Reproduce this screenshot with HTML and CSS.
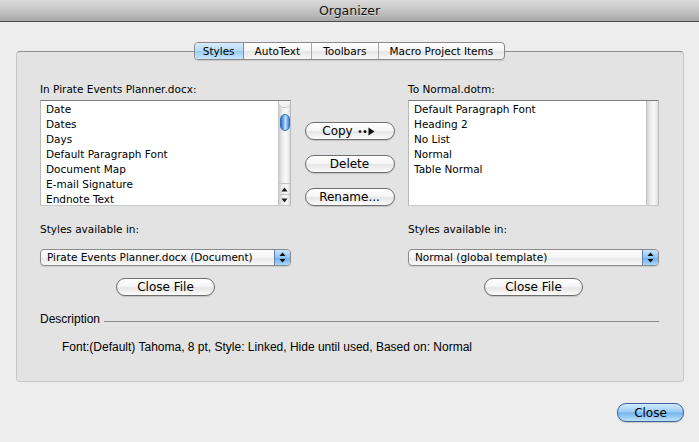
FILE: index.html
```html
<!DOCTYPE html>
<html>
<head>
<meta charset="utf-8">
<title>Organizer</title>
<link rel="stylesheet" href="styles.css">
</head>
<body>
<div class="window">
  <div class="titlebar">Organizer</div>
  <div class="content">
    <div class="panel">
      <div class="tabs">
        <span class="tab tab-active tab-narrow">Styles</span>
        <span class="tab">AutoText</span>
        <span class="tab">Toolbars</span>
        <span class="tab">Macro Project Items</span>
      </div>
      <div class="grid">
        <div class="col">
          <div class="label">In Pirate Events Planner.docx:</div>
          <div class="list">
            <ul class="items">
              <li>Date</li>
              <li>Dates</li>
              <li>Days</li>
              <li>Default Paragraph Font</li>
              <li>Document Map</li>
              <li>E-mail Signature</li>
              <li>Endnote Text</li>
            </ul>
            <div class="scrollbar">
              <div class="sb-cap"></div>
              <div class="sb-track"><div class="sb-thumb"></div></div>
              <div class="sb-arrow">
                <svg width="7" height="5" viewBox="0 0 7 5"><polygon points="3.5,0.5 6.5,4.5 0.5,4.5" fill="#1c1c1c"/></svg>
              </div>
              <div class="sb-arrow">
                <svg width="7" height="5" viewBox="0 0 7 5"><polygon points="0.5,0.5 6.5,0.5 3.5,4.5" fill="#1c1c1c"/></svg>
              </div>
            </div>
          </div>
          <div class="label label-avail">Styles available in:</div>
          <div class="popup">
            <span class="popup-text">Pirate Events Planner.docx (Document)</span>
            <span class="popup-arrow">
              <svg width="7" height="11" viewBox="0 0 7 11"><polygon points="3.5,0.5 6.5,4 0.5,4" fill="#111"/><polygon points="0.5,7 6.5,7 3.5,10.5" fill="#111"/></svg>
            </span>
          </div>
          <button class="btn btn-file">Close File</button>
        </div>
        <div class="mid">
          <button class="btn btn-mid">Copy <svg class="copy-icon" width="20" height="9" viewBox="0 0 20 9"><circle cx="3" cy="4.5" r="1.5" fill="#333"/><circle cx="8" cy="4.5" r="1.5" fill="#111"/><polygon points="11.5,0.5 17.5,4.5 11.5,8.5" fill="#111"/></svg></button>
          <button class="btn btn-mid">Delete</button>
          <button class="btn btn-mid">Rename...</button>
        </div>
        <div class="col">
          <div class="label">To Normal.dotm:</div>
          <div class="list">
            <ul class="items">
              <li>Default Paragraph Font</li>
              <li>Heading 2</li>
              <li>No List</li>
              <li>Normal</li>
              <li>Table Normal</li>
            </ul>
            <div class="scrollbar scrollbar-empty"></div>
          </div>
          <div class="label label-avail">Styles available in:</div>
          <div class="popup">
            <span class="popup-text">Normal (global template)</span>
            <span class="popup-arrow">
              <svg width="7" height="11" viewBox="0 0 7 11"><polygon points="3.5,0.5 6.5,4 0.5,4" fill="#111"/><polygon points="0.5,7 6.5,7 3.5,10.5" fill="#111"/></svg>
            </span>
          </div>
          <button class="btn btn-file">Close File</button>
        </div>
      </div>
      <div class="desc">
        <div class="desc-head"><span>Description</span><span class="rule"></span></div>
        <div class="desc-text">Font:(Default) Tahoma, 8 pt, Style: Linked, Hide until used, Based on: Normal</div>
      </div>
    </div>
    <div class="footer">
      <button class="btn btn-default">Close</button>
    </div>
  </div>
</div>
</body>
</html>
```

FILE: styles.css
```css
html, body {
  margin: 0;
  padding: 0;
}
body {
  width: 699px;
  height: 442px;
  overflow: hidden;
  background: #ededed;
  font-family: "DejaVu Sans", sans-serif;
  font-size: 10.5px;
  color: #000;
}
.window {
  height: 442px;
}
.titlebar {
  height: 21px;
  line-height: 22px;
  border-bottom: 1px solid #4d4d4d;
  background: linear-gradient(#dadada, #c4c4c4 50%, #a8a8a8);
  text-align: center;
  font-size: 12.5px;
  color: #111;
  text-shadow: 0 1px 0 rgba(255, 255, 255, 0.45);
}
.content {
  padding: 0 15px 0 16px;
}
.panel {
  box-sizing: border-box;
  margin-top: 29px;
  width: 668px;
  height: 331px;
  border: 1px solid #c6c6c6;
  border-top-color: #8f8f8f;
  border-radius: 4px;
  background: #e3e3e3;
  padding: 0 24px 0 23px;
}
.tabs {
  display: flex;
  width: max-content;
  height: 18px;
  box-sizing: border-box;
  margin: -10px auto 0;
  border: 1px solid #8a8a8a;
  border-radius: 4px;
  overflow: hidden;
  background: linear-gradient(#ffffff, #f4f4f4 50%, #e6e6e6 51%, #f6f6f6);
  box-shadow: 0 1px 1px rgba(0, 0, 0, 0.12);
}
.tab {
  padding: 0 11px;
  line-height: 16px;
  border-left: 1px solid #a9a9a9;
  white-space: nowrap;
}
.tab:first-child {
  border-left: none;
}
.tab-narrow {
  padding: 0 8px 0 8px;
}
.tab-active {
  background: linear-gradient(#d9edfc, #b3d9f7 50%, #98cbf3 51%, #c9e6fc);
  border-right: 1px solid #6f8fb8;
}
.tab-active + .tab {
  border-left: none;
}
.grid {
  display: grid;
  grid-template-columns: 251px 1fr 251px;
  margin-top: 22px;
}
.col {
  display: flex;
  flex-direction: column;
}
.label {
  height: 14px;
  line-height: 14px;
  white-space: nowrap;
}
.list {
  box-sizing: border-box;
  margin-top: 4px;
  height: 106px;
  display: flex;
  background: #fff;
  border: 1px solid #b9b9b9;
  border-top-color: #7f7f7f;
  border-bottom-color: #c9c9c9;
  overflow: hidden;
}
.items {
  flex: 1;
  margin: 0;
  padding: 1px 0 0 5px;
  list-style: none;
  overflow: hidden;
}
.items li {
  height: 15px;
  line-height: 15px;
  white-space: nowrap;
}
.scrollbar {
  width: 11px;
  display: flex;
  flex-direction: column;
  border-left: 1px solid #c4c4c4;
  background: linear-gradient(to right, #cfcfcf, #ececec 30%, #fafafa 65%, #dedede);
}
.scrollbar-empty {
  background: linear-gradient(to right, #d4d4d4, #eeeeee 35%, #f7f7f7 65%, #e0e0e0);
}
.sb-cap {
  height: 6px;
  border-bottom-left-radius: 5px;
  border-bottom-right-radius: 5px;
  border-bottom: 1px solid #c7c7c7;
  background: #f3f3f3;
}
.sb-track {
  flex: 1;
  padding-top: 6px;
}
.sb-thumb {
  box-sizing: border-box;
  width: 10px;
  height: 17px;
  margin: 0 auto;
  border: 1px solid #3a6cb0;
  border-radius: 5px;
  background: linear-gradient(to right, #2f6fc7, #6ea8ea 30%, #c5e0fb 55%, #86bcf1 75%, #3c7ed4);
}
.sb-arrow {
  height: 10px;
  display: flex;
  align-items: center;
  justify-content: center;
  border-top: 1px solid #c3c3c3;
}
.label-avail {
  margin-top: 16px;
}
.popup {
  box-sizing: border-box;
  margin-top: 13px;
  height: 17px;
  display: flex;
  border: 1px solid #8b8b8b;
  border-radius: 4px;
  overflow: hidden;
  background: linear-gradient(#ffffff, #f5f5f5 50%, #e9e9e9 51%, #f8f8f8);
  box-shadow: 0 1px 1px rgba(0, 0, 0, 0.1);
}
.popup-text {
  flex: 1;
  padding-left: 6px;
  line-height: 15px;
  white-space: nowrap;
}
.popup-arrow {
  width: 15px;
  display: flex;
  align-items: center;
  justify-content: center;
  border-left: 1px solid #5e7fae;
  background: linear-gradient(#c9e4fb, #8ec3f2 50%, #6aaeee 51%, #a9d6fb);
}
.btn {
  box-sizing: border-box;
  height: 18px;
  padding: 0;
  border: 1px solid #6f6f6f;
  border-radius: 9px;
  background: linear-gradient(#ffffff, #f6f6f6 45%, #e6e6e6 55%, #fbfbfb);
  font-family: "DejaVu Sans", sans-serif;
  font-size: 12px;
  line-height: 16px;
  color: #000;
  box-shadow: 0 1px 1px rgba(0, 0, 0, 0.15);
  display: flex;
  align-items: center;
  justify-content: center;
}
.btn-file {
  margin-top: 12px;
  width: 99px;
  align-self: center;
}
.mid {
  display: flex;
  flex-direction: column;
  align-items: center;
  gap: 15px;
  padding-top: 40px;
}
.btn-mid {
  width: 90px;
}
.copy-icon {
  margin-left: 4px;
}
.desc {
  margin-top: 16px;
  font-family: "Liberation Sans", Arial, sans-serif;
  font-size: 12px;
}
.desc-head {
  display: flex;
  align-items: center;
  height: 14px;
  line-height: 14px;
}
.rule {
  flex: 1;
  height: 1px;
  margin: 4px 0 0 4px;
  background: #8a8a8a;
}
.desc-text {
  margin-top: 14px;
  padding-left: 22px;
  line-height: 14px;
  white-space: nowrap;
}
.footer {
  display: flex;
  justify-content: flex-end;
  margin-top: 21px;
}
.btn-default {
  width: 67px;
  height: 19px;
  border-color: #3b5f98;
  background: linear-gradient(#d3eafc, #98cbf4 48%, #72b4ef 52%, #bfe2fd);
}
```
